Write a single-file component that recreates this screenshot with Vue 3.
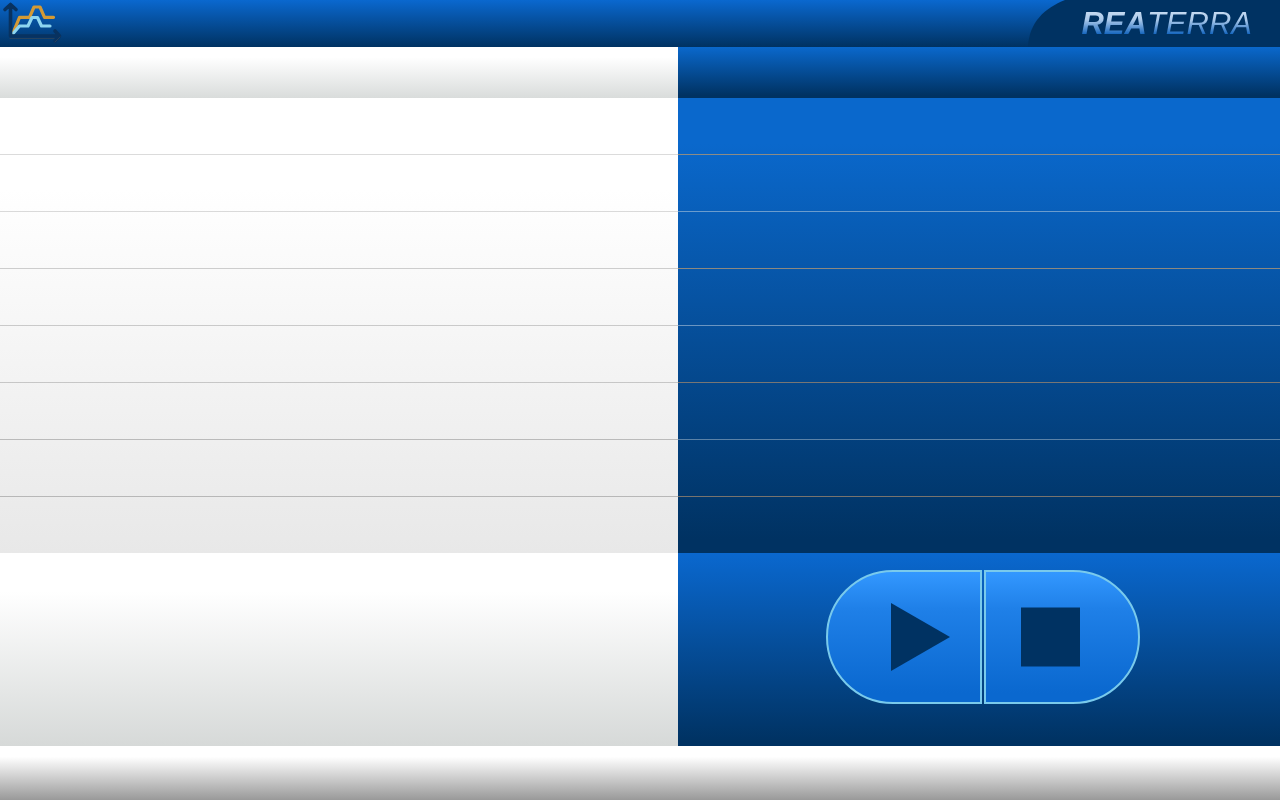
<script setup>
const rows = 8
</script>

<template>
  <div class="screen">
    <header class="topbar">
      <svg class="chart" viewBox="0 0 64 46" aria-hidden="true">
        <g fill="none" stroke-linejoin="round" stroke-linecap="round">
          <path d="M13 33 19.500 17.300H29.500L34 7h6L44.500 17.300H53.500" stroke="#d49a35" stroke-width="3.200" />
          <path d="M13.500 33 19.500 26H28L32 17.500h5.500L41.500 26H50" stroke="#8dd5f0" stroke-width="3.200" />
          <path d="M10.500 36V6M5 9.500 10.500 4.500 16 9.500M10.500 36H58M55 31 59.500 36 55 41" stroke="#083260" stroke-width="3.600" />
          <path d="M10.500 4.500 15 9H6Z" fill="#083260" />
          <path d="M10 38.500H54M55 42 60 37" stroke="#26425e" stroke-width="1" />
        </g>
      </svg>
      <div class="brand">
        <svg class="curve" viewBox="0 0 40 47" preserveAspectRatio="none" aria-hidden="true">
          <path d="M38 0C18 8 2 22 1 47H40V0Z" fill="#003262" />
        </svg>
        <div class="plate"><span class="name"><b>REA</b>TERRA</span></div>
      </div>
    </header>
    <main class="panels">
      <section class="panel light">
        <div class="head"></div>
        <ul class="list"><li v-for="n in rows" :key="n"></li></ul>
        <div class="foot"></div>
      </section>
      <section class="panel dark">
        <div class="head"></div>
        <ul class="list"><li v-for="n in rows" :key="n"></li></ul>
        <div class="foot">
          <button class="play" type="button" aria-label="Play">
            <svg viewBox="0 0 60 68" width="60" height="68"><path d="M0 0 59 34 0 68Z" fill="#003262" /></svg>
          </button>
          <button class="stop" type="button" aria-label="Stop">
            <svg viewBox="0 0 60 60" width="60" height="60"><path d="M0 .500h59v59H0Z" fill="#003262" /></svg>
          </button>
        </div>
      </section>
    </main>
    <footer class="status"></footer>
  </div>
</template>

<style>
body { margin: 0; }
</style>

<style scoped>
.screen {
  min-height: 100vh;
  display: flex;
  flex-direction: column;
  font-family: "Liberation Sans", Arial, sans-serif;
}
.topbar {
  height: 47px;
  display: flex;
  justify-content: space-between;
  background: linear-gradient(#0a68cf, #003262);
}
.chart { width: 64px; height: 46px; }
.brand { display: flex; }
.curve { width: 40px; height: 47px; }
.plate {
  padding: 0 28px 0 14px;
  background: #003262;
  line-height: 47px;
}
.name {
  display: block;
  font-size: 31px;
  font-style: italic;
  color: transparent;
  background: linear-gradient(#c4daf2 12px, #a9c8ea 20px, #1767bf 34px);
  background-clip: text;
}
.panels {
  flex: 1;
  display: grid;
  grid-template-columns: 53fr 47fr;
}
.panel { display: flex; flex-direction: column; }
.head { height: 51px; }
.list {
  flex: 1;
  margin: 0;
  padding: 0;
  list-style: none;
  display: flex;
  flex-direction: column;
}
.list li {
  flex: 1 1 57px;
  box-sizing: border-box;
  border-bottom: 1px solid rgba(0, 0, 0, 0.14);
}
.list li:last-child { border: 0; flex-basis: 56px; }
.foot { height: 193px; box-sizing: border-box; }
.light .head { background: linear-gradient(#fff 20%, #d9dcdb); }
.light .list { background: linear-gradient(#fff 20%, #e8e8e8); }
.light .foot { background: linear-gradient(#fff 20%, #d6d9d8); }
.light li:nth-child(n + 3) { border-color: rgba(0, 0, 0, 0.18); }
.light li:nth-child(n + 6) { border-color: rgba(0, 0, 0, 0.22); }
.dark .head { background: linear-gradient(#0a68cc, #003262 95%); }
.dark .list { background: linear-gradient(#0a68cc 10%, #003262 97%); }
.dark .foot {
  display: flex;
  justify-content: center;
  align-items: flex-start;
  gap: 2px;
  padding: 17px 0 0 8px;
  background: linear-gradient(#0a68cf, #003262 98%);
}
.dark li:nth-child(odd) { border-color: rgba(174, 150, 118, 0.8); }
.dark li:nth-child(even) { border-color: rgba(174, 196, 218, 0.6); }
.dark li:nth-child(n + 5) { border-color: rgba(150, 130, 110, 0.8); }
.dark li:nth-child(6) { border-color: rgba(150, 175, 195, 0.6); }
button {
  width: 156px;
  height: 134px;
  box-sizing: border-box;
  padding: 0;
  display: flex;
  align-items: center;
  border: 2px solid #79caec;
  background: linear-gradient(#3398ff, #1f80e8 28%, #0a68cf 93%);
}
.play { border-radius: 67px 0 0 67px; padding-left: 63px; }
.stop { border-radius: 0 67px 67px 0; padding-left: 35px; }
.status {
  height: 54px;
  background: linear-gradient(#fff 20%, #999);
}
</style>
